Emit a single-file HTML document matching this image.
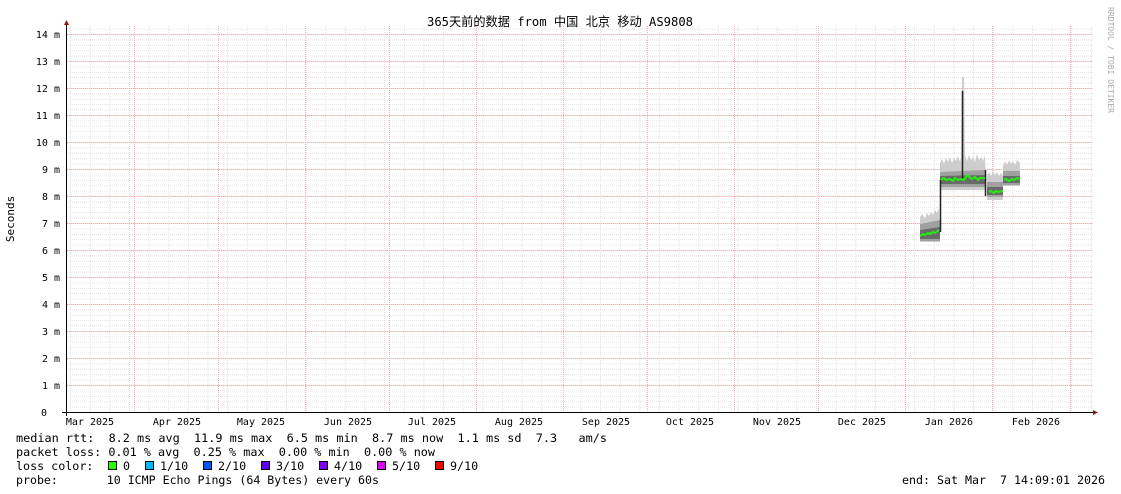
<!DOCTYPE html>
<html><head><meta charset="utf-8"><style>
html,body{margin:0;padding:0;background:#fff;width:1121px;height:494px;overflow:hidden}
svg text{font-family:"DejaVu Sans Mono","Liberation Mono",monospace}
</style></head><body>
<svg width="1121" height="494" viewBox="0 0 1121 494" xmlns="http://www.w3.org/2000/svg">
<defs>
<pattern id="hm" x="0" y="412" width="10" height="5.4" patternUnits="userSpaceOnUse">
<line x1="0" y1="0.5" x2="10" y2="0.5" stroke="#e2e2e2" stroke-width="1" stroke-dasharray="1,1"/>
</pattern>
<pattern id="vm" x="89.7" y="0" width="19.63" height="10" patternUnits="userSpaceOnUse">
<line x1="0.5" y1="0" x2="0.5" y2="10" stroke="#e2e2e2" stroke-width="1" stroke-dasharray="1,1"/>
</pattern>
</defs>
<rect x="0" y="0" width="1121" height="494" fill="#fff"/>
<rect x="67" y="26" width="1026" height="386" fill="url(#hm)"/>
<rect x="67" y="26" width="1026" height="386" fill="url(#vm)"/>
<g stroke="#f4b0b0" stroke-width="1" stroke-dasharray="1,1">
<line x1="67" y1="34.5" x2="1093" y2="34.5"/><line x1="67" y1="61.5" x2="1093" y2="61.5"/><line x1="67" y1="88.5" x2="1093" y2="88.5"/><line x1="67" y1="115.5" x2="1093" y2="115.5"/><line x1="67" y1="142.5" x2="1093" y2="142.5"/><line x1="67" y1="169.5" x2="1093" y2="169.5"/><line x1="67" y1="196.5" x2="1093" y2="196.5"/><line x1="67" y1="223.5" x2="1093" y2="223.5"/><line x1="67" y1="250.5" x2="1093" y2="250.5"/><line x1="67" y1="277.5" x2="1093" y2="277.5"/><line x1="67" y1="304.5" x2="1093" y2="304.5"/><line x1="67" y1="331.5" x2="1093" y2="331.5"/><line x1="67" y1="358.5" x2="1093" y2="358.5"/><line x1="67" y1="385.5" x2="1093" y2="385.5"/>
<line x1="134.5" y1="26" x2="134.5" y2="412"/><line x1="218.5" y1="26" x2="218.5" y2="412"/><line x1="305.5" y1="26" x2="305.5" y2="412"/><line x1="389.5" y1="26" x2="389.5" y2="412"/><line x1="476.5" y1="26" x2="476.5" y2="412"/><line x1="563.5" y1="26" x2="563.5" y2="412"/><line x1="647.5" y1="26" x2="647.5" y2="412"/><line x1="734.5" y1="26" x2="734.5" y2="412"/><line x1="818.5" y1="26" x2="818.5" y2="412"/><line x1="905.5" y1="26" x2="905.5" y2="412"/><line x1="992.5" y1="26" x2="992.5" y2="412"/><line x1="1070.5" y1="26" x2="1070.5" y2="412"/>
</g>
<!-- smoke -->
<g fill="#cdcdcd">
<path d="M920,217 L922,214 L925,218 L927,213 L929,216 L931,212 L933,215 L935,210 L937,213 L939,208 L940,242 L920,242Z"/>
<path d="M940,163 L942,159 L944,164 L946,158 L948,162 L950,157 L952,163 L954,158 L956,161 L958,156 L960,162 L961,158 L962,77 L964,77 L965,156 L967,161 L969,155 L971,160 L973,157 L975,162 L977,154 L979,160 L981,157 L983,161 L985,155 L986,190 L940,190Z"/>
<path d="M987,176 L989,172 L991,176 L993,171 L995,175 L997,172 L999,176 L1001,173 L1003,176 L1003,200 L987,200Z"/>
<path d="M1003,166 L1005,161 L1007,165 L1009,160 L1011,164 L1013,161 L1015,165 L1017,160 L1020,163 L1020,186 L1003,186Z"/>
</g>
<g fill="#a0a0a0">
<path d="M920,224 L940,220 L940,241 L920,241Z"/>
<path d="M940,172 L986,170 L986,187 L940,187Z"/>
<path d="M987,182 L1003,182 L1003,197 L987,197Z"/>
<path d="M1003,171 L1020,171 L1020,185 L1003,185Z"/>
</g>
<g fill="#6a6a6a">
<path d="M920,230 L940,227 L940,239 L920,239Z"/>
<path d="M940,176 L986,175 L986,184 L940,184Z"/>
<path d="M987,187 L1003,187 L1003,195 L987,195Z"/>
<path d="M1003,176 L1020,176 L1020,183 L1003,183Z"/>
</g>
<g fill="none" stroke="#222" stroke-width="1.5">
<path d="M940.5,232 L940.5,180"/><path d="M962.5,180 L962.5,91"/><path d="M985.5,170 L985.5,196"/>
</g>
<g fill="none" stroke="#22ee11" stroke-width="2">
<path d="M920,236 L923,234 L925,235 L928,233 L930,234 L933,232 L935,233 L939,230"/>
<path d="M941,180 L944,178 L946,180 L950,179 L953,181 L955,178 L958,180 L961,179 L964,180 L966,177 L968,175 L970,178 L972,179 L975,177 L978,180 L980,178 L985,178"/>
<path d="M989,192 L991,191 L994,193 L996,191 L998,192 L1003,191"/>
<path d="M1004,180 L1006,179 L1009,181 L1012,179 L1014,180 L1017,178 L1020,179"/>
</g>
<!-- axes -->
<line x1="66.5" y1="24" x2="66.5" y2="416" stroke="#000"/>
<line x1="62" y1="412.5" x2="1095" y2="412.5" stroke="#000"/>
<path d="M64,25 L69,25 L66.5,20Z" fill="#8b1a1a"/>
<path d="M1093,410 L1093,415 L1098,412.5Z" fill="#8b1a1a"/>
<g font-size="10" fill="#000" text-anchor="end">
<text x="60" y="38">14 m</text><text x="60" y="65">13 m</text><text x="60" y="92">12 m</text><text x="60" y="119">11 m</text><text x="60" y="146">10 m</text><text x="60" y="173">9 m</text><text x="60" y="200">8 m</text><text x="60" y="227">7 m</text><text x="60" y="254">6 m</text><text x="60" y="281">5 m</text><text x="60" y="308">4 m</text><text x="60" y="335">3 m</text><text x="60" y="362">2 m</text><text x="60" y="389">1 m</text><text x="47" y="416">0</text>
</g>
<g font-size="10" fill="#000" text-anchor="middle">
<text x="90" y="425">Mar 2025</text><text x="177" y="425">Apr 2025</text><text x="261" y="425">May 2025</text><text x="348" y="425">Jun 2025</text><text x="432" y="425">Jul 2025</text><text x="519" y="425">Aug 2025</text><text x="606" y="425">Sep 2025</text><text x="690" y="425">Oct 2025</text><text x="777" y="425">Nov 2025</text><text x="862" y="425">Dec 2025</text><text x="949" y="425">Jan 2026</text><text x="1036" y="425">Feb 2026</text>
</g>
<text x="14" y="219" font-size="11" text-anchor="middle" transform="rotate(-90 14 219)" fill="#000">Seconds</text>
<text x="427" y="26" font-size="12.5" textLength="266" lengthAdjust="spacingAndGlyphs" fill="#000" style='font-family:"DejaVu Sans Mono","Noto Sans CJK SC",monospace'>365天前的数据 from 中国 北京 移动 AS9808</text>
<text x="1108" y="60" font-size="8" fill="#aaa" text-anchor="middle" transform="rotate(90 1108 60)">RRDTOOL / TOBI OETIKER</text>
<g font-size="11.7" fill="#000">
<text x="16" y="442" xml:space="preserve" textLength="591" lengthAdjust="spacingAndGlyphs">median rtt:  8.2 ms avg  11.9 ms max  6.5 ms min  8.7 ms now  1.1 ms sd  7.3   am/s</text>
<text x="16" y="456" xml:space="preserve" textLength="419" lengthAdjust="spacingAndGlyphs">packet loss: 0.01 % avg  0.25 % max  0.00 % min  0.00 % now</text>
<text x="16" y="470" xml:space="preserve">loss color:</text>
<text x="123" y="470">0</text><text x="160" y="470">1/10</text><text x="218" y="470">2/10</text><text x="276" y="470">3/10</text><text x="334" y="470">4/10</text><text x="392" y="470">5/10</text><text x="450" y="470">9/10</text>
<text x="16" y="484" xml:space="preserve" textLength="363" lengthAdjust="spacingAndGlyphs">probe:       10 ICMP Echo Pings (64 Bytes) every 60s</text>
<text x="902" y="484" xml:space="preserve" textLength="203" lengthAdjust="spacingAndGlyphs">end: Sat Mar  7 14:09:01 2026</text>
</g>
<g stroke="#000" stroke-width="1">
<rect x="108.5" y="461.5" width="8" height="8" fill="#26ff00"/>
<rect x="145.5" y="461.5" width="8" height="8" fill="#00b8ff"/>
<rect x="203.5" y="461.5" width="8" height="8" fill="#0059ff"/>
<rect x="261.5" y="461.5" width="8" height="8" fill="#5e00ff"/>
<rect x="319.5" y="461.5" width="8" height="8" fill="#7e00ff"/>
<rect x="377.5" y="461.5" width="8" height="8" fill="#dd00ff"/>
<rect x="435.5" y="461.5" width="8" height="8" fill="#ff0000"/>
</g>
</svg>
</body></html>
